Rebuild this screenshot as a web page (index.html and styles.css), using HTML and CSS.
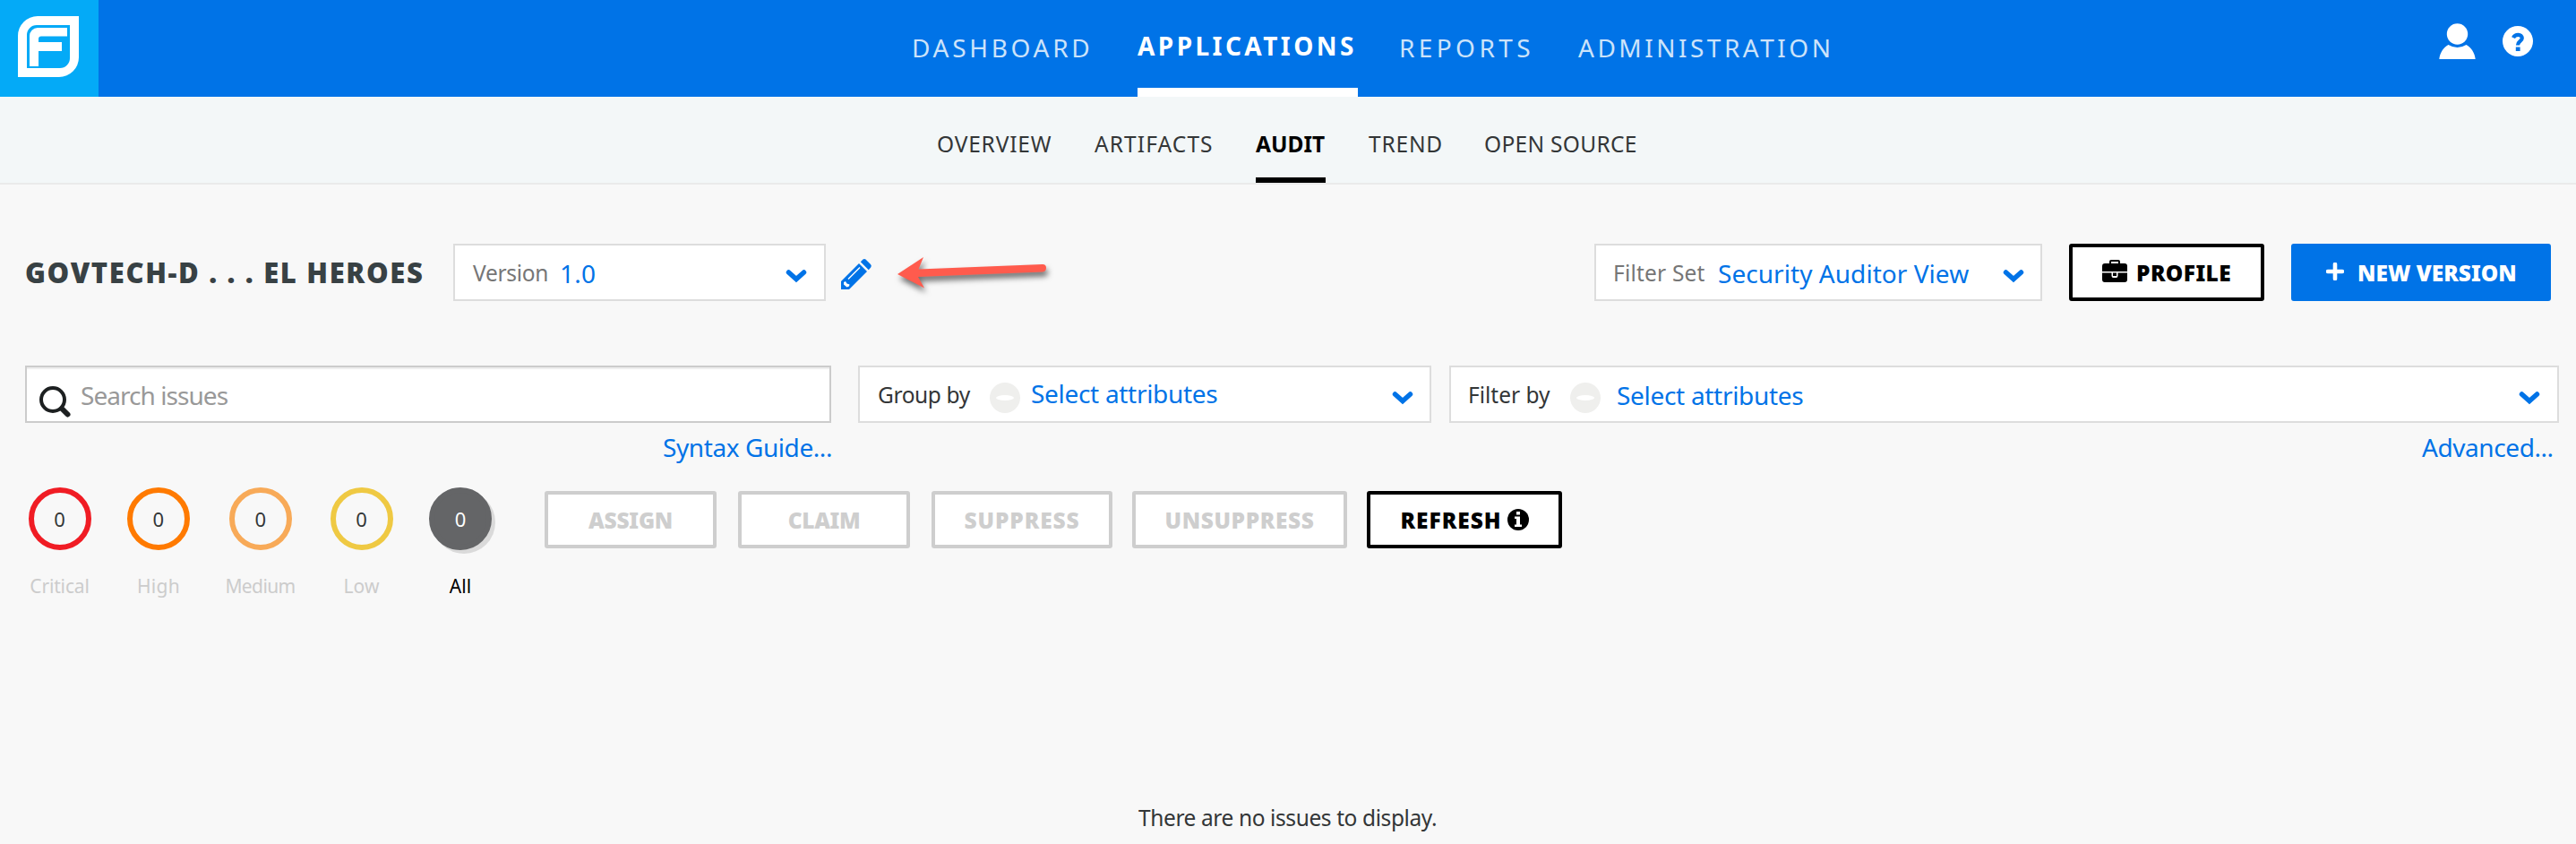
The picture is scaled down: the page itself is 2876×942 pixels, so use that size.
FILE: index.html
```
<!DOCTYPE html>
<html lang="en">
<head>
<meta charset="utf-8">
<title>Audit</title>
<link rel="stylesheet" href="styles.css">
</head>
<body>
<header class="topbar">
  <a class="logo">
    <svg width="68" height="68" viewBox="0 0 68 68">
      <path fill="#fff" fill-rule="evenodd" d="M22 0H68V46A22 22 0 0 1 46 68H0V22A22 22 0 0 1 22 0ZM21 10A11 11 0 0 0 10 21V58H47A11 11 0 0 0 58 47V10Z"/>
      <path fill="#fff" d="M22 13H55V22.500H26A3 3 0 0 0 23 25.500V29H49V39H23V56H13V22A9 9 0 0 1 22 13Z"/>
    </svg>
  </a>
  <nav class="mainnav">
    <a class="nav-dashboard">DASHBOARD</a>
    <a class="nav-applications active">APPLICATIONS</a>
    <a class="nav-reports">REPORTS</a>
    <a class="nav-administration">ADMINISTRATION</a>
  </nav>
  <div class="tools">
    <svg width="41" height="41" viewBox="0 0 41 41" fill="#fff">
      <circle cx="20.500" cy="12" r="11.700"/>
      <path d="M.3 40C1 33 5 27 10.500 24Q20.500 30 30.500 24C36 27 40 33 40.700 40Z"/>
    </svg>
    <svg class="help" width="34" height="34" viewBox="0 0 34 34">
      <circle cx="17" cy="17" r="17" fill="#fff"/>
      <path d="M12 13.200C14 8.600 21.800 8.800 21.800 13.500C21.800 17 17 17 17 21.500" fill="none" stroke="#0073e7" stroke-width="4.200"/>
      <rect x="14.800" y="23.500" width="4.800" height="4.500" fill="#0073e7"/>
    </svg>
  </div>
</header>

<nav class="subnav">
  <a class="sub-overview">OVERVIEW</a>
  <a class="sub-artifacts">ARTIFACTS</a>
  <a class="sub-audit active">AUDIT</a>
  <a class="sub-trend">TREND</a>
  <a class="sub-source">OPEN SOURCE</a>
</nav>

<main>
  <section class="titlebar">
    <h1>GOVTECH-D . . . EL HEROES</h1>
    <div class="select version">
      <span class="caption version-caption">Version</span>
      <span class="value low version-value">1.0</span>
      <svg class="chevron" width="24" height="16" viewBox="0 0 24 16"><path d="M3.500 4L12 11.500L20.500 4"/></svg>
    </div>
    <svg class="pencil" width="36" height="36" viewBox="0 0 36 36">
      <path fill="#0073e7" d="M21 6L30 15L10 35H1V26Z"/>
      <path fill="#0073e7" d="M22.800 4.200L25.500 1.500Q27 .3 28.500 1.500L34 7Q35.600 8.600 34.200 10.400L31.800 13.200Z"/>
      <path d="M9 23.500L22 10.500" stroke="#fff" stroke-width="1.500"/>
      <path fill="#fff" d="M4 27L6 26L7.500 28.500L10.500 29.500L10 31.500L7.500 32.500L4 29.500Z"/>
    </svg>
    <svg class="arrow" width="172" height="44" viewBox="0 0 172 44">
      <path fill="#ff5b4d" d="M0 21L29 2L23.500 15.500L162 10Q166 10 166 14Q166 18 162 18.500L23 24L30 36.500Z"/>
    </svg>
    <div class="select filterset">
      <span class="caption filterset-caption">Filter Set</span>
      <span class="value low filterset-value">Security Auditor View</span>
      <svg class="chevron" width="24" height="16" viewBox="0 0 24 16"><path d="M3.500 4L12 11.500L20.500 4"/></svg>
    </div>
    <button class="btn profile">
      <svg width="28" height="28" viewBox="0 0 28 28">
        <path fill="#000" d="M8 4V2Q8 0 10 0H18Q20 0 20 2V4H25Q28 4 28 7V13H0V7Q0 4 3 4ZM10 4H18V2H10Z" fill-rule="evenodd"/>
        <path fill="#000" d="M0 14.500H10.500V18Q10.500 20 12.500 20H15.500Q17.500 20 17.500 18V14.500H28V22Q28 25 25 25H3Q0 25 0 22Z"/>
        <path fill="#000" d="M12 14.500H16V18H12Z"/>
      </svg>
      <span class="profile-label">PROFILE</span>
    </button>
    <button class="btn primary">
      <svg width="20" height="20" viewBox="0 0 20 20"><path d="M10 2V18M2 10H18" stroke="#fff" stroke-width="4.600" stroke-linecap="round"/></svg>
      <span class="new-label">NEW VERSION</span>
    </button>
  </section>

  <section class="filters">
    <div class="search">
      <svg width="36" height="36" viewBox="0 0 36 36" fill="none" stroke="#1d2021">
        <circle cx="15" cy="15" r="13" stroke-width="4"/>
        <path d="M25.500 25.500L31.500 31.500" stroke-width="6" stroke-linecap="round"/>
      </svg>
      <span class="search-text">Search issues</span>
    </div>
    <div class="select groupby">
      <span class="caption dark group-caption">Group by</span>
      <span class="minus"></span>
      <span class="value high attributes">Select attributes</span>
      <svg class="chevron" width="24" height="16" viewBox="0 0 24 16"><path d="M3.500 4L12 11.500L20.500 4"/></svg>
    </div>
    <div class="select filterby">
      <span class="caption dark filter-caption">Filter by</span>
      <span class="minus"></span>
      <span class="value low attributes">Select attributes</span>
      <svg class="chevron" width="24" height="16" viewBox="0 0 24 16"><path d="M3.500 4L12 11.500L20.500 4"/></svg>
    </div>
  </section>

  <section class="links">
    <a class="syntax">Syntax Guide...</a>
    <a class="advanced">Advanced...</a>
  </section>

  <section class="actions">
    <div class="severity critical"><span class="ring">0</span><span class="name">Critical</span></div>
    <div class="severity high-sev"><span class="ring">0</span><span class="name">High</span></div>
    <div class="severity medium"><span class="ring">0</span><span class="name">Medium</span></div>
    <div class="severity low-sev"><span class="ring">0</span><span class="name">Low</span></div>
    <div class="severity all"><span class="ring">0</span><span class="name">All</span></div>
    <div class="buttons">
      <button class="btn disabled assign">ASSIGN</button>
      <button class="btn disabled claim">CLAIM</button>
      <button class="btn disabled suppress">SUPPRESS</button>
      <button class="btn disabled unsuppress">UNSUPPRESS</button>
      <button class="btn refresh"><span class="refresh-label">REFRESH</span>
        <svg width="24" height="24" viewBox="0 0 24 24"><circle cx="12" cy="12" r="12"/><path fill="#fff" d="M10 3H14V6.500H10ZM8 8.500H14V17.500H16V20H8V17.500H10V11H8Z"/></svg>
      </button>
    </div>
  </section>
  <p class="empty">There are no issues to display.</p>
</main>
</body>
</html>
```
FILE: styles.css
```
* { box-sizing: border-box; }
body {
  margin: 0;
  height: 942px;
  overflow: hidden;
  background: #f8f8f8;
  color: #333637;
  font-family: "Noto Sans", sans-serif;
  font-size: 24.5px;
  white-space: nowrap;
}
svg { display: block; flex: none; }

.topbar { display: flex; height: 108px; background: #0073e7; }
.logo { width: 110px; height: 108px; padding: 18px 20px; background: #04aaf7; }
.mainnav { display: flex; width: 1100px; margin-left: 908px; font-size: 28px; line-height: 106px; color: #cce3fa; }
.mainnav a { height: 108px; }
.nav-dashboard { width: 252px; letter-spacing: 3.700px; }
.mainnav .nav-applications { width: 246px; line-height: 103px; letter-spacing: 3.450px; }
.nav-reports { width: 200px; margin-left: 46px; letter-spacing: 4.400px; }
.nav-administration { letter-spacing: 3.500px; }
.mainnav .active { color: #fff; font-weight: 700; border-bottom: 10px solid #fff; }
.tools { display: flex; align-items: flex-start; margin-left: 605px; padding-top: 26px; }
.help { margin: 3px 0 0 30px; }

.subnav { display: flex; height: 98px; padding-left: 1046px; background: #f3f7f8; border-bottom: 2px solid #eaeaea; line-height: 106px; }
.subnav a { height: 96px; }
.sub-overview { width: 176px; letter-spacing: .8px; }
.sub-artifacts { width: 180px; letter-spacing: 1.100px; }
.sub-audit { width: 78px; letter-spacing: 0; }
.sub-trend { width: 129px; margin-left: 48px; letter-spacing: .8px; }
.sub-source { letter-spacing: .3px; }
.subnav .active { color: #000; font-weight: 700; border-bottom: 6px solid #000; }

main { padding: 66px 0 0 28px; }
.titlebar { display: flex; height: 64px; align-items: center; }
h1 { flex: none; width: 478px; margin: 0; font-size: 31px; font-weight: 900; line-height: 65px; letter-spacing: 1.650px; color: #384144; }

.select { display: flex; flex: none; align-items: center; height: 64px; background: #fff; border: 2px solid #ddd; }
.caption { color: #767676; line-height: 60px; padding-top: 1px; }
.dark { color: #333637; }
.value { font-size: 28px; line-height: 60px; color: #0073e7; }
.low { padding-top: 2px; }
.high { padding-bottom: 2px; }
.chevron { margin-left: auto; margin-top: 8px; }
.chevron path { fill: none; stroke: #0073e7; stroke-width: 5.500px; stroke-linecap: round; }
.version { width: 416px; padding: 0 19px 0 20px; }
.version-caption { width: 97px; letter-spacing: -.3px; }
.version-value { letter-spacing: .3px; }
.pencil { margin: 4px 0 0 16px; }
.arrow { margin: 5px 0 0 28px; filter: drop-shadow(2px 5px 3px rgba(0, 0, 0, .55)); }
.filterset { width: 500px; margin-left: 606px; padding: 0 18px 0 19px; }
.filterset-caption { width: 117px; letter-spacing: .2px; }
.filterset-value { letter-spacing: .05px; }

.btn { display: flex; flex: none; align-items: center; justify-content: center; height: 64px; padding: 0; border: 4px solid #000; border-radius: 3px; background: #fff; color: #000; font: 900 24.5px/57px "Noto Sans", sans-serif; }
.profile { width: 218px; margin-left: 30px; }
.profile-label { width: 106px; margin-left: 10px; letter-spacing: .4px; text-align: left; }
.primary { width: 290px; margin-left: 30px; background: #0073e7; border-color: #0073e7; color: #fff; }
.primary svg { margin-top: -2px; }
.new-label { width: 177px; margin-left: 15px; letter-spacing: 0; text-align: left; }

.filters { display: flex; margin-top: 72px; }
.search { display: flex; width: 900px; height: 64px; padding-left: 14px; background: #fff; border: 2px solid #ccc; box-shadow: inset 0 2px 1px #eee; }
.search svg { margin-top: 21px; }
.search-text { margin-left: 10px; font-size: 28px; line-height: 62px; letter-spacing: -.95px; color: #999; }
.groupby { width: 640px; margin-left: 30px; padding: 0 18px 0 20px; }
.group-caption { width: 125px; letter-spacing: -.4px; }
.minus { width: 34px; height: 34px; margin-top: 8px; border: solid #efefed; border-width: 14px 7px; border-radius: 50%; background: #fff; }
.attributes { margin-left: 12px; letter-spacing: -.3px; }
.filterby { width: 1239px; margin-left: 20px; padding: 0 19px 0 19px; }
.filter-caption { width: 114px; }
.filterby .attributes { margin-left: 18px; }

.links { display: flex; height: 72px; font-size: 28px; line-height: 54px; color: #0073e7; letter-spacing: -.42px; }
.syntax { width: 1963px; padding-left: 712px; flex: none; }
.advanced { margin-left: 713px; }

.actions { display: flex; margin-left: -1px; }
.severity { display: flex; flex-direction: column; align-items: center; width: 110px; color: #ccc; font-size: 21px; line-height: 28px; }
.ring { width: 70px; height: 70px; margin-bottom: 26px; border: 6px solid; border-radius: 50%; color: #333637; font-size: 22px; line-height: 59px; text-align: center; }
.critical { width: 79px; letter-spacing: -.15px; }
.high-sev { width: 142px; letter-spacing: .3px; }
.medium { width: 85px; letter-spacing: -.6px; }
.low-sev { width: 141px; }
.all { width: 80px; color: #000; }
.critical .ring { border-color: #f01c24; }
.high-sev .ring { border-color: #ff7a00; }
.medium .ring { border-color: #f8aa58; }
.low-sev .ring { border-color: #efc943; }
.all .ring { border-color: #646567; background: #646567; color: #fff; box-shadow: 4px 4px 0 #dadada; }
.buttons { display: flex; margin: 4px 0 0 54px; }
.disabled { border-color: #cecece; color: #cecece; }
.assign { width: 192px; letter-spacing: -.2px; }
.claim { width: 192px; margin-left: 24px; letter-spacing: -.4px; }
.suppress { width: 202px; margin-left: 24px; letter-spacing: .9px; }
.unsuppress { width: 240px; margin-left: 22px; letter-spacing: .6px; }
.refresh { width: 218px; margin-left: 22px; letter-spacing: 1px; }
.refresh svg { margin-left: 6px; margin-top: -1px; }
.empty { margin: 227px 0 0 1243px; line-height: 36px; letter-spacing: -.4px; }
```
